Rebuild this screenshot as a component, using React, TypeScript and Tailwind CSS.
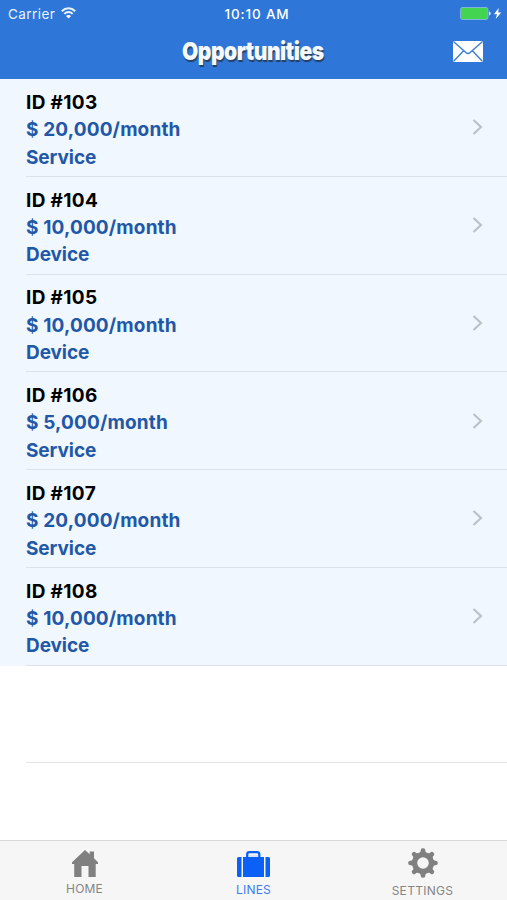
const lines = [
  { id: 103, amount: '20,000', kind: 'Service' },
  { id: 104, amount: '10,000', kind: 'Device' },
  { id: 105, amount: '10,000', kind: 'Device' },
  { id: 106, amount: '5,000', kind: 'Service' },
  { id: 107, amount: '20,000', kind: 'Service' },
  { id: 108, amount: '10,000', kind: 'Device' },
];

function Wifi() {
  return (
    <svg className="mb-[2px] ml-[6px] h-[12px] w-[15px]" viewBox="0 0 15 12" fill="none" stroke="#e6f3ff" strokeWidth="2">
      <path d="M0.8 4.2C4.6.4 10.4.4 14.2 4.2" />
      <path d="M3.3 6.9C5.7 4.5 9.3 4.5 11.7 6.9" />
      <path d="M7.5 11.5 5 8.9C6.4 7.6 8.6 7.6 10 8.9Z" fill="#fff" stroke="none" />
    </svg>
  );
}

function Battery() {
  return (
    <svg className="mb-[2px] h-[13px] w-[42px]" viewBox="0 0 42 13">
      <rect x="0.5" y="0.5" width="27.5" height="12" rx="2" fill="#43d551" stroke="#83b5dc" />
      <path d="M29 4.5c2.2.3 2.2 3.7 0 4z" fill="#d6e9fa" />
      <path d="M38.7 1 34 7.2h3L35.7 12 41.2 5.5h-3z" fill="#fff" />
    </svg>
  );
}

function Envelope() {
  return (
    <svg className="h-[21px] w-[30px]" viewBox="0 0 30 21">
      <rect width="30" height="21" rx="1.5" fill="#fff" />
      <path d="M.7.8 12.6 11.2Q15 13.8 17.4 11.2L29.3.8M.7 20.2 10.6 9.8M29.3 20.2 19.4 9.8" fill="none" stroke="#3d7fd0" strokeWidth="1.4" />
    </svg>
  );
}

function HomeIcon() {
  return (
    <svg className="h-[27px] w-[26px]" viewBox="0 0 26 27" fill="#808080">
      <path d="M13 0 17.7 4.3V1.5H22V8.3L26 12.3V14H23.7V27H16.5V16H9.5V27H2.2V14H0V12.3Z" />
    </svg>
  );
}

function CaseIcon() {
  return (
    <svg className="h-[26px] w-[33px]" viewBox="0 0 33 26" fill="#0b60f5">
      <path d="M1.5 6H4.5V26H1.5Q0 26 0 24.5V7.5Q0 6 1.5 6ZM6 6H27V26H6ZM28.5 6H31.5Q33 6 33 7.5V24.5Q33 26 31.5 26H28.5Z" />
      <path d="M10.2 7V3.5Q10.2 1.2 12.5 1.2H20Q22.3 1.2 22.3 3.5V7" fill="none" stroke="#0b60f5" strokeWidth="2.3" />
      <path d="M11.4 5H21.2" stroke="#bcd2f7" strokeWidth="1" />
    </svg>
  );
}

function GearIcon() {
  return (
    <svg className="h-[30px] w-[30px]" viewBox="-15 -15 30 30">
      <g fill="#808080">
        {[0, 45, 90, 135, 180, 225, 270, 315].map((angle) => (
          <path key={angle} d="M-4.2-9Q-2.1-10.5-2.1-13.5Q-2-14.7 0-14.8Q2-14.7 2.1-13.5Q2.1-10.5 4.2-9Z" transform={`rotate(${angle})`} />
        ))}
      </g>
      <circle r="8.4" fill="none" stroke="#808080" strokeWidth="5.2" />
    </svg>
  );
}

export default function App() {
  return (
    <div className="flex h-[900px] w-[507px] flex-col overflow-hidden bg-white font-['Inter','Liberation_Sans',sans-serif]">
      <header className="h-[79px] shrink-0 bg-[#2e77d8] text-white">
        <div className="grid h-[28px] grid-cols-[1fr_auto_1fr] items-center pr-[5px] pl-2 text-[13.5px]">
          <div className="flex items-center text-[#e6f3ff]">
            <span className="tracking-[0.45px]">Carrier</span>
            <Wifi />
          </div>
          <span className="ml-[4px] font-medium tracking-[0.85px]">10:10 AM</span>
          <div className="flex justify-end"><Battery /></div>
        </div>
        <div className="grid h-[46px] grid-cols-[1fr_auto_1fr] items-center pr-6 pl-6">
          <span />
          <h1 className="w-[144px] origin-left scale-x-[0.843] whitespace-nowrap text-[25px] leading-none font-black tracking-[-0.6px] text-[#f5f8fd] [text-shadow:1px_2px_1px_#263f60]">Opportunities</h1>
          <div className="flex justify-end"><Envelope /></div>
        </div>
      </header>

      <main className="flex-1">
        {lines.map((line) => (
          <div key={line.id} className="h-[97.75px] bg-[#f0f7fe] pl-[26px]">
            <div className="flex h-full items-center justify-between border-b border-[#dce2e9] pr-6">
              <div className="pt-[5px] text-[19px] leading-[27.3px] font-bold text-[#2257a8]">
                <div className="tracking-[0.35px] text-black">ID #{line.id}</div>
                <div className="tracking-[0.15px]">$ {line.amount}/month</div>
                <div className="tracking-[-0.08px]">{line.kind}</div>
              </div>
              <svg className="h-[16px] w-[11px]" viewBox="0 0 11 16" fill="none" stroke="#bbc0c7" strokeWidth="2.1">
                <path d="M1.5 1 9 8 1.5 15" />
              </svg>
            </div>
          </div>
        ))}
        <div className="ml-[26px] h-[97.75px] border-b border-[#e3e4e6]" />
      </main>

      <nav className="grid h-[60px] shrink-0 grid-cols-3 border-t border-[#d6d7d9] bg-[#f6f6f6] text-[12px] text-[#858585]">
        <div className="flex flex-col items-center pt-[9px]">
          <HomeIcon />
          <span className="mt-[4px] leading-[15px] tracking-[0.2px]">HOME</span>
        </div>
        <div className="flex flex-col items-center pt-[10px] text-[#3d7df0]">
          <CaseIcon />
          <span className="mt-[5px] leading-[15px] tracking-[0.2px]">LINES</span>
        </div>
        <div className="flex flex-col items-center pt-[7px]">
          <GearIcon />
          <span className="mt-[5px] leading-[15px] tracking-[0.3px]">SETTINGS</span>
        </div>
      </nav>
    </div>
  );
}
